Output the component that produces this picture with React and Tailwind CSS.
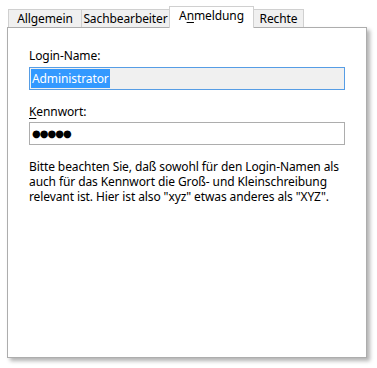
export default function App() {
  const font = { fontFamily: '"Segoe UI", "Noto Sans", sans-serif' };
  return (
    <div className="w-[377px] h-[368px] bg-white pl-[7px] pt-[6px] text-[12px] text-black tracking-[-0.1px]" style={font}>
      <div className="flex items-end h-[21px] w-[360px]">
        <div className="ml-px w-[74px] h-[18px] bg-[#f0f0f0] border border-b-0 border-[#d0d0d0] flex items-center justify-center leading-none">Allgemein</div>
        <div className="-ml-px w-[89px] h-[18px] bg-[#f0f0f0] border border-b-0 border-[#d0d0d0] flex items-center justify-center leading-none">Sachbearbeiter</div>
        <div className="relative z-10 -ml-px -mb-px w-[85px] h-[22px] bg-white border border-b-0 border-[#d0d0d0] flex items-start pt-[3px] justify-center leading-none">
          <span>A<span className="underline underline-offset-2">n</span>meldung</span>
        </div>
        <div className="-ml-px w-[51px] h-[18px] bg-[#f0f0f0] border border-b-0 border-[#d0d0d0] flex items-center justify-center leading-none">Rechte</div>
      </div>
      <div className="w-[360px] h-[331px] bg-white border border-[#adadad] shadow-[3px_3px_4px_rgba(0,0,0,0.3)] pl-[21px] pt-[20px]">
        <div className="leading-[16px] h-[16px]">Login-Name:</div>
        <div className="mt-[3px] w-[316px] h-[23px] border border-[#569de5] bg-[#f0f0f0] flex items-center px-[1px]">
          <span className="bg-[#3399ff] text-white leading-[19px] h-[19px] px-[1px]">Administrator</span>
        </div>
        <div className="mt-[14px] leading-[16px] h-[16px]">
          <span className="underline underline-offset-2">K</span>ennwort:
        </div>
        <div className="mt-[2px] w-[316px] h-[23px] border border-[#adadad] bg-white flex items-center pl-[2px]">
          <span className="text-[10px] tracking-[-1px] leading-none" style={{ fontFamily: '"DejaVu Sans", sans-serif' }}>●●●●●</span>
        </div>
        <p className="mt-[14px] leading-[15px] w-[320px]">
          Bitte beachten Sie, daß sowohl für den Login-Namen als<br />
          auch für das Kennwort die Groß- und Kleinschreibung<br />
          relevant ist. Hier ist also "xyz" etwas anderes als "XYZ".
        </p>
      </div>
    </div>
  );
}
